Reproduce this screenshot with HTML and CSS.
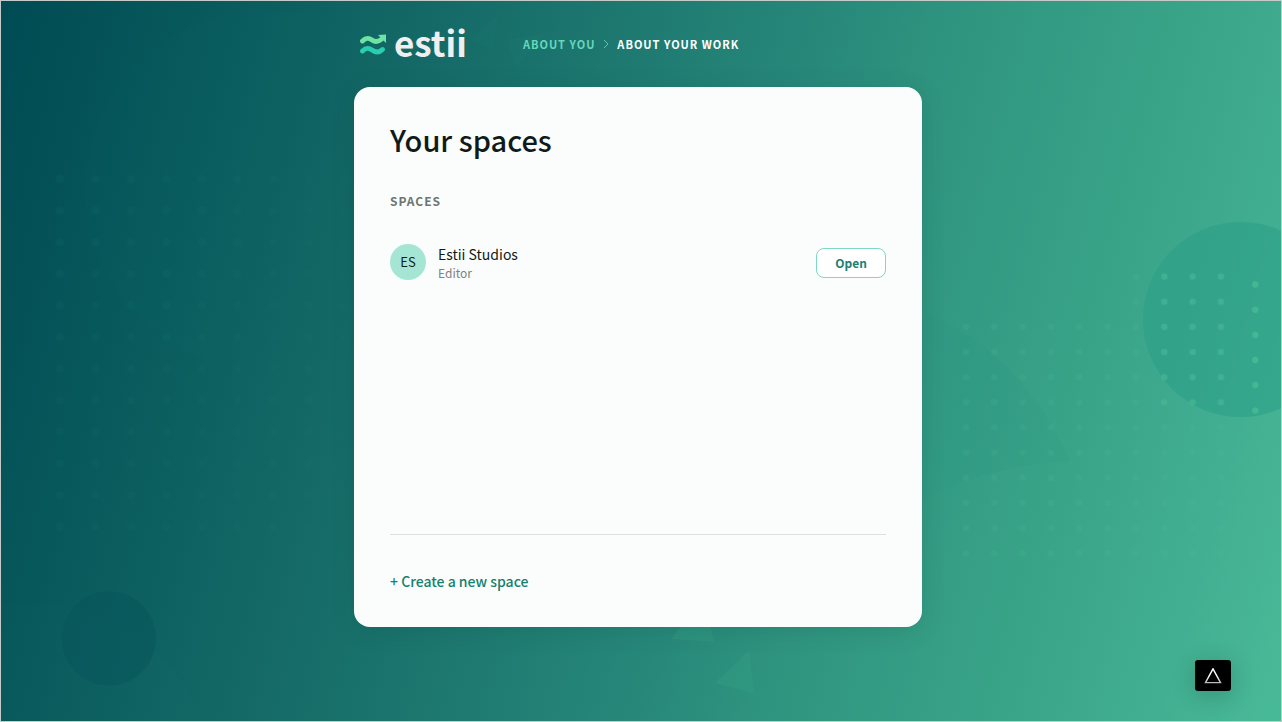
FILE: index.html
```html
<!DOCTYPE html>
<html lang="en">
<head>
<meta charset="utf-8">
<meta name="viewport" content="width=device-width, initial-scale=1">
<title>Your spaces</title>
<link rel="stylesheet" href="styles.css">
</head>
<body>
<svg class="backdrop" viewBox="1 1 1280 720" preserveAspectRatio="xMidYMid slice" aria-hidden="true">
  <defs>
    <pattern id="dots-left" x="42" y="163" width="35.5" height="31.6" patternUnits="userSpaceOnUse"><circle cx="18" cy="16" r="4" fill="#11736c"/></pattern>
    <pattern id="dots-right" x="952" y="264" width="28.33" height="25.15" patternUnits="userSpaceOnUse"><circle cx="14" cy="12.6" r="3.2" fill="#4abb97"/></pattern>
  </defs>
  <circle cx="265" cy="190" r="180" fill="#1d7a70" opacity=".03"/>
  <circle cx="30" cy="790" r="187" fill="#1d7a70" opacity=".06"/>
  <path d="M920 310Q1020 350 1070 462Q1000 462 920 500Z" fill="#2a9680" opacity=".12"/>
  <circle cx="109" cy="638.500" r="47" fill="#06535b" opacity=".4"/>
  <circle cx="1240.500" cy="319.500" r="97.500" fill="#2ba087" opacity=".6"/>
  <rect x="42" y="163" width="312" height="379" fill="url(#dots-left)" opacity=".16"/>
  <rect x="952" y="314.300" width="198" height="251" fill="url(#dots-right)" opacity=".18"/>
  <rect x="1122" y="264" width="28.330" height="50.300" fill="url(#dots-right)" opacity=".18"/>
  <rect x="1150.300" y="264" width="85" height="151" fill="url(#dots-right)" opacity=".55"/>
  <rect x="1150.300" y="415" width="85" height="150" fill="url(#dots-right)" opacity=".2"/>
  <g fill="#4abb97" opacity=".8"><circle cx="1255.300" cy="284.500" r="3.200"/><circle cx="1255.300" cy="309.700" r="3.200"/><circle cx="1255.300" cy="335" r="3.200"/><circle cx="1255.300" cy="360" r="3.200"/><circle cx="1255.300" cy="385" r="3.200"/><circle cx="1255.300" cy="410.500" r="3.200"/></g>
  <path d="M749.500 650.500L754 693.500L715 683ZM686 620H709L714 642L671 639Z" fill="#35a083" opacity=".35"/>
  <path d="M498 14L493 50L470 40ZM507 40L545 34L516 68Z" fill="#26877a" opacity=".1"/>
</svg>
<div class="page">
  <header class="header">
    <a class="logo" href="#">
      <svg class="logo-mark" viewBox="0 0 26 22" fill="none" stroke-width="4.800" stroke-linecap="round" aria-hidden="true">
        <path d="M2.500 8C6 4.500 8.500 4.500 12 7C15.500 9.500 18.500 9 22.500 5.500" stroke="#6fe3a4"/>
        <path d="M18 2L26 1.500V10Z" fill="#6fe3a4"/>
        <path d="M2.500 18C6 14.500 8.500 14.500 12 17C15.500 19.500 19 20 22.500 16.500" stroke="#27cfae"/>
      </svg>
      <span class="logo-text">estii</span>
    </a>
    <nav class="steps" aria-label="Progress">
      <a class="step" href="#">About you</a>
      <svg class="chevron" viewBox="0 0 6 10" aria-hidden="true"><path d="M1 1L5 5L1 9" fill="none" stroke="#58c9ae"/></svg>
      <a class="step step-current" href="#" aria-current="step">About your work</a>
    </nav>
  </header>
  <main class="card">
    <h1 class="title">Your spaces</h1>
    <h2 class="section-label">Spaces</h2>
    <ul class="spaces">
      <li class="space">
        <span class="avatar" aria-hidden="true">ES</span>
        <div class="space-info">
          <span class="space-name">Estii Studios</span>
          <span class="space-role">Editor</span>
        </div>
        <button class="open" type="button">Open</button>
      </li>
    </ul>
    <footer class="card-footer"><a class="create" href="#">+ Create a new space</a></footer>
  </main>
</div>
<button class="dev-button" type="button" aria-label="Developer tools">
  <svg class="dev-icon" viewBox="0 0 18 16" aria-hidden="true">
    <defs><linearGradient id="edge" gradientUnits="userSpaceOnUse" x1="0" y1="0" x2="0" y2="16"><stop offset=".5" stop-color="#fff"/><stop offset="1" stop-color="#aaa"/></linearGradient></defs>
    <path d="M9 .8L16.500 14.600H1.500Z" fill="none" stroke="url(#edge)" stroke-width="1.400"/>
  </svg>
</button>
</body>
</html>
```

FILE: styles.css
```css
* { box-sizing: border-box; }

body {
  margin: 0;
  min-height: 100vh;
  position: relative;
  border: 1px solid #c5cbc9;
  background: linear-gradient(105deg, #004b54 0%, #07585b 13%, #166c68 32%, #27887a 56%, #2f947f 65%, #39a388 80%, #41ad91 90%, #49ba97 100%);
  color: #101b19;
  font-family: "Noto Sans CJK SC", "Noto Sans", sans-serif;
  font-size: 14px;
  line-height: 20px;
}

a { color: inherit; text-decoration: none; }

.backdrop {
  position: absolute;
  inset: 0;
  width: 100%;
  height: 100%;
}

.page {
  position: relative;
  width: 100%;
  max-width: 568px;
  margin: 0 auto;
  left: -3px;
}

.header {
  display: flex;
  align-items: center;
  gap: 56px;
  height: 86px;
  padding-left: 6px;
}

.logo { display: flex; align-items: center; gap: 8px; }
.logo-mark { width: 26px; height: 22px; }

.logo-text {
  padding-bottom: 4px;
  color: #efefef;
  font-size: 35px;
  font-weight: 700;
  line-height: 40px;
}

.steps { display: flex; align-items: center; gap: 8px; }

.step {
  color: #66d8bb;
  font-size: 11px;
  font-weight: 700;
  letter-spacing: 1px;
  line-height: 18px;
  text-transform: uppercase;
}

.step-current { color: #fff; }
.chevron { width: 6px; height: 10px; }

.card {
  display: flex;
  flex-direction: column;
  min-height: 540px;
  padding: 32px 36px;
  border-radius: 16px;
  background: #fbfdfc;
  box-shadow: 0 4px 24px rgba(0, 60, 50, 0.14);
}

.title {
  margin: 0;
  font-size: 29px;
  font-weight: 500;
  line-height: 40px;
}

.section-label {
  margin: 32px 0 33px;
  color: #6d7573;
  font-size: 12px;
  font-weight: 700;
  letter-spacing: 1px;
  text-transform: uppercase;
}

.spaces { flex: 1; margin: 0; padding: 0; list-style: none; }
.space { display: flex; align-items: flex-start; gap: 12px; }

.avatar {
  display: grid;
  place-items: center;
  width: 36px;
  height: 36px;
  border-radius: 50%;
  background: #a5e5d4;
  font-size: 13px;
}

.space-info { display: flex; flex: 1; flex-direction: column; }
.space-name { line-height: 20px; }
.space-role { color: #7b8280; font-size: 12px; line-height: 18px; }

.open {
  height: 30px;
  margin-top: 4px;
  padding: 0 18px 2px;
  border: 1px solid #7fd8c2;
  border-radius: 8px;
  background: #fff;
  color: #1b7f70;
  font: 700 12px "Noto Sans CJK SC", "Noto Sans", sans-serif;
}

.card-footer { padding-top: 34px; border-top: 1px solid #dce1df; }
.create { display: block; padding-bottom: 2px; color: #15806f; font-weight: 500; line-height: 24px; }

.dev-button {
  position: fixed;
  right: 51px;
  bottom: 31px;
  display: grid;
  place-items: center;
  width: 36px;
  height: 31px;
  padding: 0;
  border: 0;
  border-radius: 3px;
  background: #000;
  box-shadow: 0 4px 24px rgba(0, 0, 0, 0.2);
}

.dev-icon { width: 18px; height: 16px; }
```
